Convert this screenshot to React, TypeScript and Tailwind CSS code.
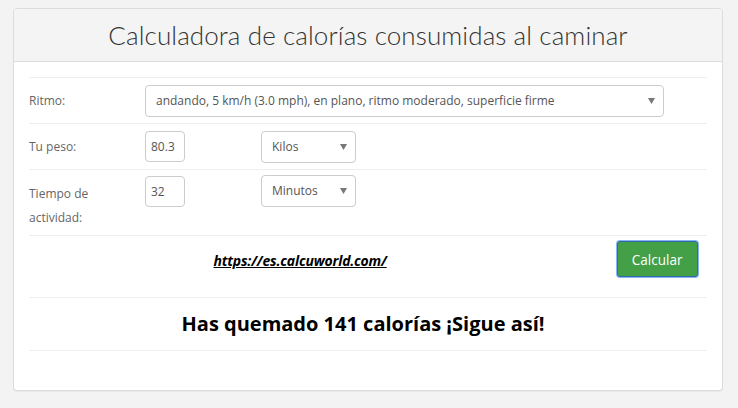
function Arrow() {
    return (
        <svg width="7" height="6" viewBox="0 0 7 6" className="absolute right-[8px] top-1/2 -translate-y-1/2">
            <path d="M0 0 L7 0 L3.5 6 Z" fill="#777" />
        </svg>
    );
}

function FakeSelect({ value, width }: { value: string; width: string }) {
    return (
        <div className={`relative h-8 ${width} rounded border border-[#ccc] bg-white pl-[10px] flex items-center text-[12px] text-[#555]`}>
            <span className="truncate pr-6">{value}</span>
            <Arrow />
        </div>
    );
}

function FakeInput({ value }: { value: string }) {
    return (
        <div className="h-[31px] w-[40px] rounded border border-[#ccc] bg-white pl-[5px] flex items-center text-[12px] text-[#555]">
            {value}
        </div>
    );
}

export default function App() {
    return (
        <div className="min-h-[408px] bg-[#f3f3f3] pt-2 px-[13px] font-['Open_Sans',sans-serif]" style={{ width: 738 }}>
            <div className="w-[710px] h-[383px] rounded border border-[#dcdcdc] bg-white overflow-hidden shadow-[0_1px_1px_rgba(0,0,0,0.05)]">
                <div className="h-[53px] bg-[#f4f4f4] border-b border-[#dcdcdc] flex items-center justify-center">
                    <h1 className="font-['Lato',sans-serif] font-light text-[26px] text-[#333] tracking-[0.1px]">
                        Calculadora de calorías consumidas al caminar
                    </h1>
                </div>

                <div className="px-[15px] pt-[15px]">
                    <div className="border-t border-[#eee]">
                        {/* Ritmo */}
                        <div className="flex items-center h-[46px] border-b border-[#eee]">
                            <div className="w-[116px] text-[12px] text-[#666]">Ritmo:</div>
                            <FakeSelect
                                value="andando, 5 km/h (3.0 mph), en plano, ritmo moderado, superficie firme"
                                width="w-[519px]"
                            />
                        </div>

                        {/* Peso */}
                        <div className="flex items-center h-[46px] border-b border-[#eee]">
                            <div className="w-[116px] text-[12px] text-[#666]">Tu peso:</div>
                            <FakeInput value="80.3" />
                            <div className="ml-[76px]">
                                <FakeSelect value="Kilos" width="w-[95px]" />
                            </div>
                        </div>

                        {/* Tiempo */}
                        <div className="flex h-[66px] border-b border-[#eee] pt-[6px]">
                            <div className="w-[116px] mt-[6px] text-[12px] leading-[24px] text-[#666]">
                                Tiempo de
                                <br />
                                actividad:
                            </div>
                            <div className="flex items-start">
                                <FakeInput value="32" />
                                <div className="ml-[76px] -mt-px">
                                    <FakeSelect value="Minutos" width="w-[95px]" />
                                </div>
                            </div>
                        </div>

                        {/* Link + boton */}
                        <div className="flex h-[62px] border-b border-[#eee] pt-[5px]">
                            <div className="w-[543px] flex justify-center pt-[12px]">
                                <a className="font-bold italic text-[15px] leading-none text-black underline inline-block scale-x-[0.93] tracking-[-0.2px]">
                                    https://es.calcuworld.com/
                                </a>
                            </div>
                            <div className="ml-[45px]">
                                <button className="h-[36px] w-[81px] rounded-[3px] bg-[#43a047] border border-[#2e6da4] shadow-[0_0_0_1px_#8ab4f8] text-white text-[15px]">
                                    <span className="inline-block scale-x-[0.9]">Calcular</span>
                                </button>
                            </div>
                        </div>

                        {/* Resultado */}
                        <div className="h-[53px] border-b border-[#eee] flex items-center justify-center pr-[10px]">
                            <p className="font-bold text-[20px] text-black">
                                Has quemado 141 calorías ¡Sigue así!
                            </p>
                        </div>
                    </div>
                </div>
            </div>
        </div>
    );
}
